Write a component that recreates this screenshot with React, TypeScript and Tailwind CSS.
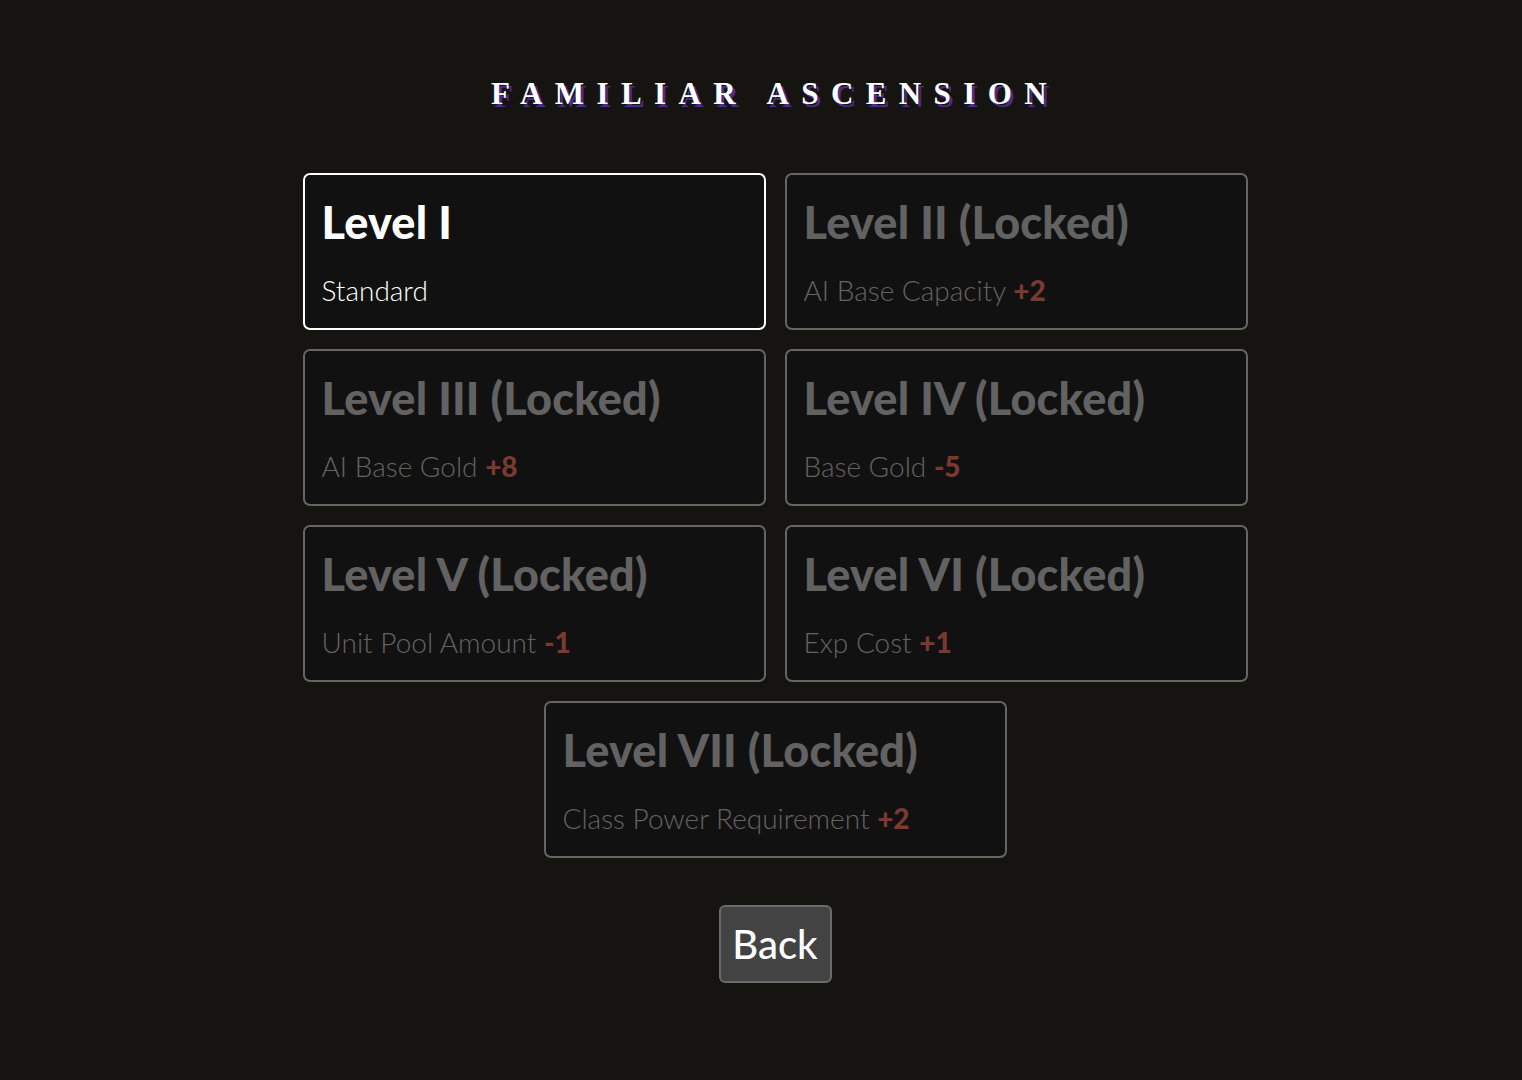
import React from "react";

type Lvl = { title: string; label: string; value: string; active?: boolean };

const levels: Lvl[] = [
  { title: "Level I", label: "Standard", value: "", active: true },
  { title: "Level II (Locked)", label: "AI Base Capacity", value: "+2" },
  { title: "Level III (Locked)", label: "AI Base Gold", value: "+8" },
  { title: "Level IV (Locked)", label: "Base Gold", value: "-5" },
  { title: "Level V (Locked)", label: "Unit Pool Amount", value: "-1" },
  { title: "Level VI (Locked)", label: "Exp Cost", value: "+1" },
  { title: "Level VII (Locked)", label: "Class Power Requirement", value: "+2" },
];

function Card({ l, extra = "" }: { l: Lvl; extra?: string }) {
  return (
    <div
      className={`h-[157px] w-[463px] rounded-[7px] border-2 pl-[17px] pt-[20px] ${
        l.active ? "border-white bg-[#111111]" : "border-[#666564] bg-[#121111]"
      } ${extra}`}
    >
      <div
        className={`text-[45px] font-black leading-[54px] tracking-[0.2px] ${
          l.active ? "text-white" : "text-[#636262]"
        }`}
      >
        {l.title}
      </div>
      <div
        className={`mt-[23px] text-[28px] font-light leading-[36px] ${
          l.active ? "text-white" : "text-[#646362]"
        }`}
      >
        {l.label}
        {l.value && (
          <>
            {" "}
            <span className="font-black text-[#7a3a2f]">{l.value}</span>
          </>
        )}
      </div>
    </div>
  );
}

export default function App() {
  return (
    <div
      className="min-h-[1080px] w-full bg-[#151411] pl-[28px]"
      style={{ fontFamily: "Lato, 'Noto Sans', sans-serif" }}
    >
      <div className="flex flex-col items-center pt-[76px]">
        <h1
          className="text-[31px] font-bold leading-[36px] tracking-[0.4em] text-white [text-shadow:3px_3px_0_#4a2b86]"
          style={{ fontFamily: "'Liberation Serif', 'Times New Roman', serif" }}
        >
          FAMILIAR ASCENSION
        </h1>
        <div className="mt-[61px] grid w-[945px] grid-cols-2 gap-[19px]">
          {levels.slice(0, 6).map((l) => (
            <Card key={l.title} l={l} />
          ))}
          <Card l={levels[6]} extra="col-span-2 justify-self-center" />
        </div>
        <button className="mt-[47px] flex h-[78px] w-[113px] items-center justify-center rounded-[6px] border-2 border-[#6a6a6a] bg-[#434343] text-[40px] font-medium text-white">
          Back
        </button>
      </div>
    </div>
  );
}
